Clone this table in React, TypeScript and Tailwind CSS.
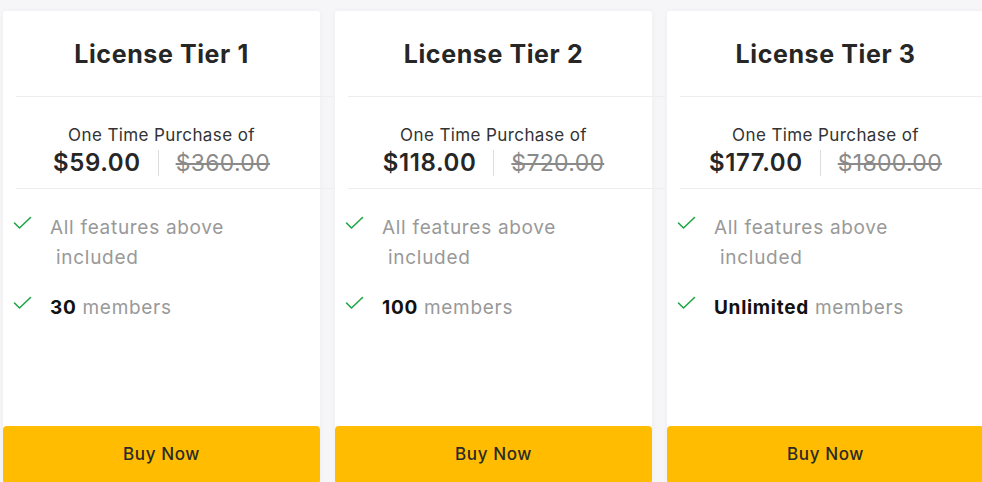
const tiers = [
  { name: 'License Tier 1', price: '$59.00', was: '$360.00', members: '30' },
  { name: 'License Tier 2', price: '$118.00', was: '$720.00', members: '100' },
  { name: 'License Tier 3', price: '$177.00', was: '$1800.00', members: 'Unlimited' },
];

const font = { fontFamily: 'Inter, "Noto Sans", sans-serif' };

function Check() {
  return (
    <svg width="19" height="14" viewBox="0 0 19 14" className="shrink-0 mt-[3px]">
      <polyline points="1.5,7 6.5,12 17.5,1.5" fill="none" stroke="#22a447" strokeWidth="1.6" strokeLinecap="round" strokeLinejoin="round" />
    </svg>
  );
}

function TierCard({ name, price, was, members }: typeof tiers[number]) {
  return (
    <div className="w-[317px] shrink-0 bg-white shadow-[0_0_6px_rgba(0,0,0,0.04)] flex flex-col rounded-t-[3px]">
      <div className="h-[85px] flex items-center justify-center pt-[3px]">
        <h2 className="text-[25px] font-bold text-[#262626] tracking-[0.6px]">{name}</h2>
      </div>
      <div className="ml-[13px] w-full h-px bg-[#eeeeee] shrink-0" />
      <div className="h-[91px] flex flex-col items-center pt-[28px]">
        <p className="text-[17px] text-[#333] leading-[20px] tracking-[0.4px]">One Time Purchase of</p>
        <div className="flex items-center mt-[3px]">
          <span className="text-[24px] font-semibold text-[#262626] leading-[30px] tracking-[0.6px]">{price}</span>
          <span className="w-px h-[26px] bg-[#dddddd] mx-[17px]" />
          <span className="text-[23px] text-[#8a8a8a] line-through leading-[30px] tracking-[0.3px]">{was}</span>
        </div>
      </div>
      <div className="ml-[13px] w-full h-px bg-[#eeeeee] shrink-0" />
      <ul className="flex flex-col gap-[20px] pt-[24px] pl-[10px] pr-[20px]">
        <li className="flex gap-[18px]">
          <Check />
          <span className="text-[19px] leading-[30px] text-[#999999] tracking-[0.7px]">
            All features above<br />&nbsp;included
          </span>
        </li>
        <li className="flex gap-[18px]">
          <Check />
          <span className="text-[19px] leading-[30px] text-[#999999] tracking-[0.7px]">
            <b className="font-bold text-[#111]">{members}</b> members
          </span>
        </li>
      </ul>
      <div className="flex-1" />
      <button className="h-[58px] w-full bg-[#ffbc00] rounded-[4px] text-[17px] font-medium text-[#2a2a2a] tracking-[0.6px]">Buy Now</button>
    </div>
  );
}

export default function App() {
  return (
    <div className="h-[482px] w-[982px] overflow-hidden bg-[#f6f6f9]" style={font}>
      <div className="flex gap-[15px] pl-[3px] pt-[11px] h-[484px]">
        {tiers.map(t => <TierCard key={t.name} {...t} />)}
      </div>
    </div>
  );
}
